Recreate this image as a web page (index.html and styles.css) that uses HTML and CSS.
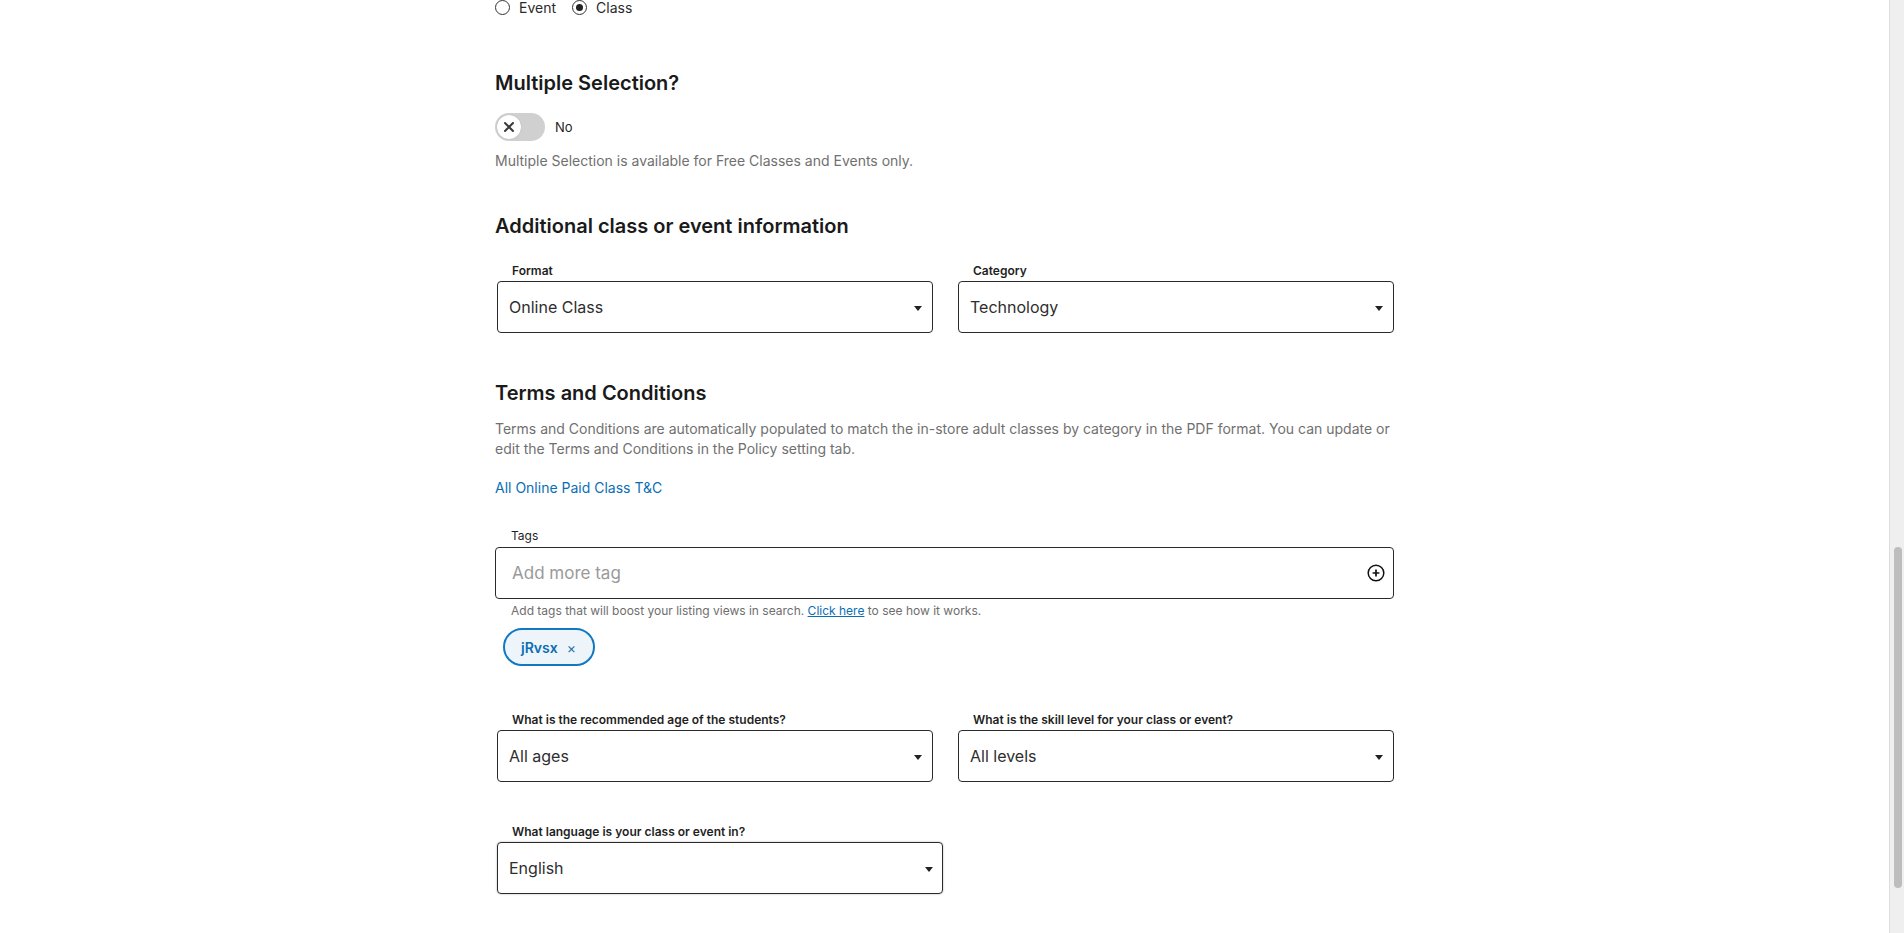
FILE: index.html
```html
<!DOCTYPE html>
<html lang="en">
<head>
<meta charset="utf-8">
<title>Class form</title>
<link rel="stylesheet" href="styles.css">
</head>
<body>
<div class="page">
  <main class="main">
    <div class="form">
      <div class="radio-row">
        <label class="radio"><span class="radio-dot"></span><span>Event</span></label>
        <label class="radio"><span class="radio-dot checked"></span><span>Class</span></label>
      </div>

      <h2 class="heading h-multi">Multiple Selection?</h2>
      <div class="toggle-row">
        <span class="toggle"><span class="knob"><svg width="12" height="12" viewBox="0 0 12 12"><path d="M2 2L10 10M10 2L2 10" stroke="#3a3a3a" stroke-width="2" stroke-linecap="round"/></svg></span></span>
        <span class="toggle-text">No</span>
      </div>
      <p class="hint">Multiple Selection is available for Free Classes and Events only.</p>

      <h2 class="heading h-add">Additional class or event information</h2>
      <div class="pair pair-format">
        <div class="field">
          <div class="label bold">Format</div>
          <div class="select"><span>Online Class</span><span class="caret"></span></div>
        </div>
        <div class="field">
          <div class="label bold">Category</div>
          <div class="select"><span>Technology</span><span class="caret"></span></div>
        </div>
      </div>

      <h2 class="heading h-terms">Terms and Conditions</h2>
      <p class="terms-text">Terms and Conditions are automatically populated to match the in-store adult classes by category in the PDF format. You can update or edit the Terms and Conditions in the Policy setting tab.</p>
      <a class="terms-link" href="#">All Online Paid Class T&amp;C</a>

      <div class="tags">
        <div class="label">Tags</div>
        <div class="tag-input">
          <span class="placeholder">Add more tag</span>
          <svg width="18" height="18" viewBox="0 0 18 18"><circle cx="9" cy="9" r="7.8" fill="none" stroke="#111" stroke-width="1.5"/><path d="M9 5.6V12.4M5.6 9H12.4" stroke="#111" stroke-width="1.7"/></svg>
        </div>
        <div class="tag-hint">Add tags that will boost your listing views in search. <a href="#">Click here</a> to see how it works.</div>
        <div class="chips"><span class="chip">jRvsx <span class="chip-x">×</span></span></div>
      </div>

      <div class="pair pair-age">
        <div class="field">
          <div class="label bold">What is the recommended age of the students?</div>
          <div class="select"><span>All ages</span><span class="caret"></span></div>
        </div>
        <div class="field">
          <div class="label bold">What is the skill level for your class or event?</div>
          <div class="select"><span>All levels</span><span class="caret"></span></div>
        </div>
      </div>

      <div class="field field-lang">
        <div class="label bold">What language is your class or event in?</div>
        <div class="select select-lang"><span>English</span><span class="caret"></span></div>
      </div>
    </div>
  </main>
  <div class="scrollbar"><div class="thumb"></div></div>
</div>
</body>
</html>
```

FILE: styles.css
```css
* { box-sizing: border-box; }
html, body { margin: 0; padding: 0; height: 100%; overflow: hidden; }
body {
  font-family: Inter, "Noto Sans", "Liberation Sans", sans-serif;
  color: #1f1f1f;
  background: #fff;
}
.page { display: flex; height: 933px; }
.main { flex: 1; }
.form { width: 899px; margin: 0 auto; padding-left: 0; }

.radio-row { display: flex; gap: 16px; height: 14px; align-items: center; font-size: 14px; line-height: 14px; color: #2b2b2b; padding-top: 1px; }
.radio { display: flex; align-items: center; gap: 9px; }
.radio-dot { width: 15px; height: 15px; border: 1px solid #333; border-radius: 50%; display: inline-flex; align-items: center; justify-content: center; }
.radio-dot.checked::after { content: ""; width: 7px; height: 7px; border-radius: 50%; background: #222; }

.heading { margin: 0; font-size: 20px; line-height: 28px; font-weight: 600; color: #1a1a1a; }
.h-multi { margin-top: 55px; }
.toggle-row { display: flex; align-items: center; gap: 10px; margin-top: 16px; height: 28px; }
.toggle { width: 50px; height: 28px; border-radius: 14px; background: #d0d0d0; display: flex; align-items: center; padding-left: 2px; }
.knob { width: 24px; height: 24px; border-radius: 50%; background: #fff; display: flex; align-items: center; justify-content: center; box-shadow: 0 0 1px rgba(0,0,0,.25); }
.toggle-text { font-size: 13px; color: #1f1f1f; }
.hint { margin: 10px 0 0; font-size: 14px; line-height: 20px; color: #707070; }

.h-add { margin-top: 41px; }
.pair { display: flex; gap: 25px; padding-left: 2px; margin-top: 24px; }
.pair-format { margin-top: 23px; }
.field { width: 436px; }
.label { font-size: 12px; line-height: 16px; color: #1f1f1f; padding-left: 15px; height: 18px; }
.label.bold { font-weight: 600; }
.select {
  height: 52px; border: 1px solid #2a2a2a; border-radius: 4px;
  display: flex; align-items: center; justify-content: space-between;
  padding: 0 10px 0 11px; font-size: 16px; color: #2e2e2e;
}
.caret { width: 0; height: 0; border-left: 4.5px solid transparent; border-right: 4.5px solid transparent; border-top: 5px solid #222; margin-top: 2px; }

.h-terms { margin-top: 46px; }
.terms-text { margin: 12px 0 0; font-size: 14px; line-height: 20px; color: #707070; max-width: 899px; }
.terms-link { display: block; margin-top: 19px; font-size: 14px; line-height: 20px; color: #0a6eb4; text-decoration: none; }

.tags { margin-top: 30px; }
.tags .label { height: 19px; line-height: 16px; padding-left: 16px; }
.tag-input {
  height: 52px; border: 1px solid #2a2a2a; border-radius: 4px;
  display: flex; align-items: center; justify-content: space-between;
  padding: 0 8px 0 16px;
}
.placeholder { font-size: 17px; color: #9a9a9a; }
.tag-hint { margin-top: 4px; padding-left: 16px; font-size: 12px; line-height: 16px; color: #6e6e6e; }
.tag-hint a { color: #0a6eb4; }
.chips { margin-top: 9px; padding-left: 8px; display: flex; }
.chip {
  height: 38px; border: 2px solid #1278c2; border-radius: 19px; background: #eef5fa;
  display: inline-flex; align-items: center; padding: 0 17px 0 16px;
  font-size: 14px; font-weight: 600; color: #0a6eb4;
}
.chip-x { font-weight: 400; font-size: 14px; margin-left: 9px; color: #2a6ea8; }

.pair-age { margin-top: 46px; }
.field-lang { margin-top: 42px; width: 446px; padding-left: 2px; box-sizing: content-box; }
.select-lang { box-shadow: 0 0 2px rgba(0,0,0,.35); padding-right: 9px; }

.scrollbar { width: 15px; background: #efefef; border-left: 1px solid #dedede; display: flex; flex-direction: column; padding-top: 547px; align-items: center; }
.thumb { width: 8px; height: 341px; background: #bdbdbd; border-radius: 4px; margin-left: 1px; }
```
